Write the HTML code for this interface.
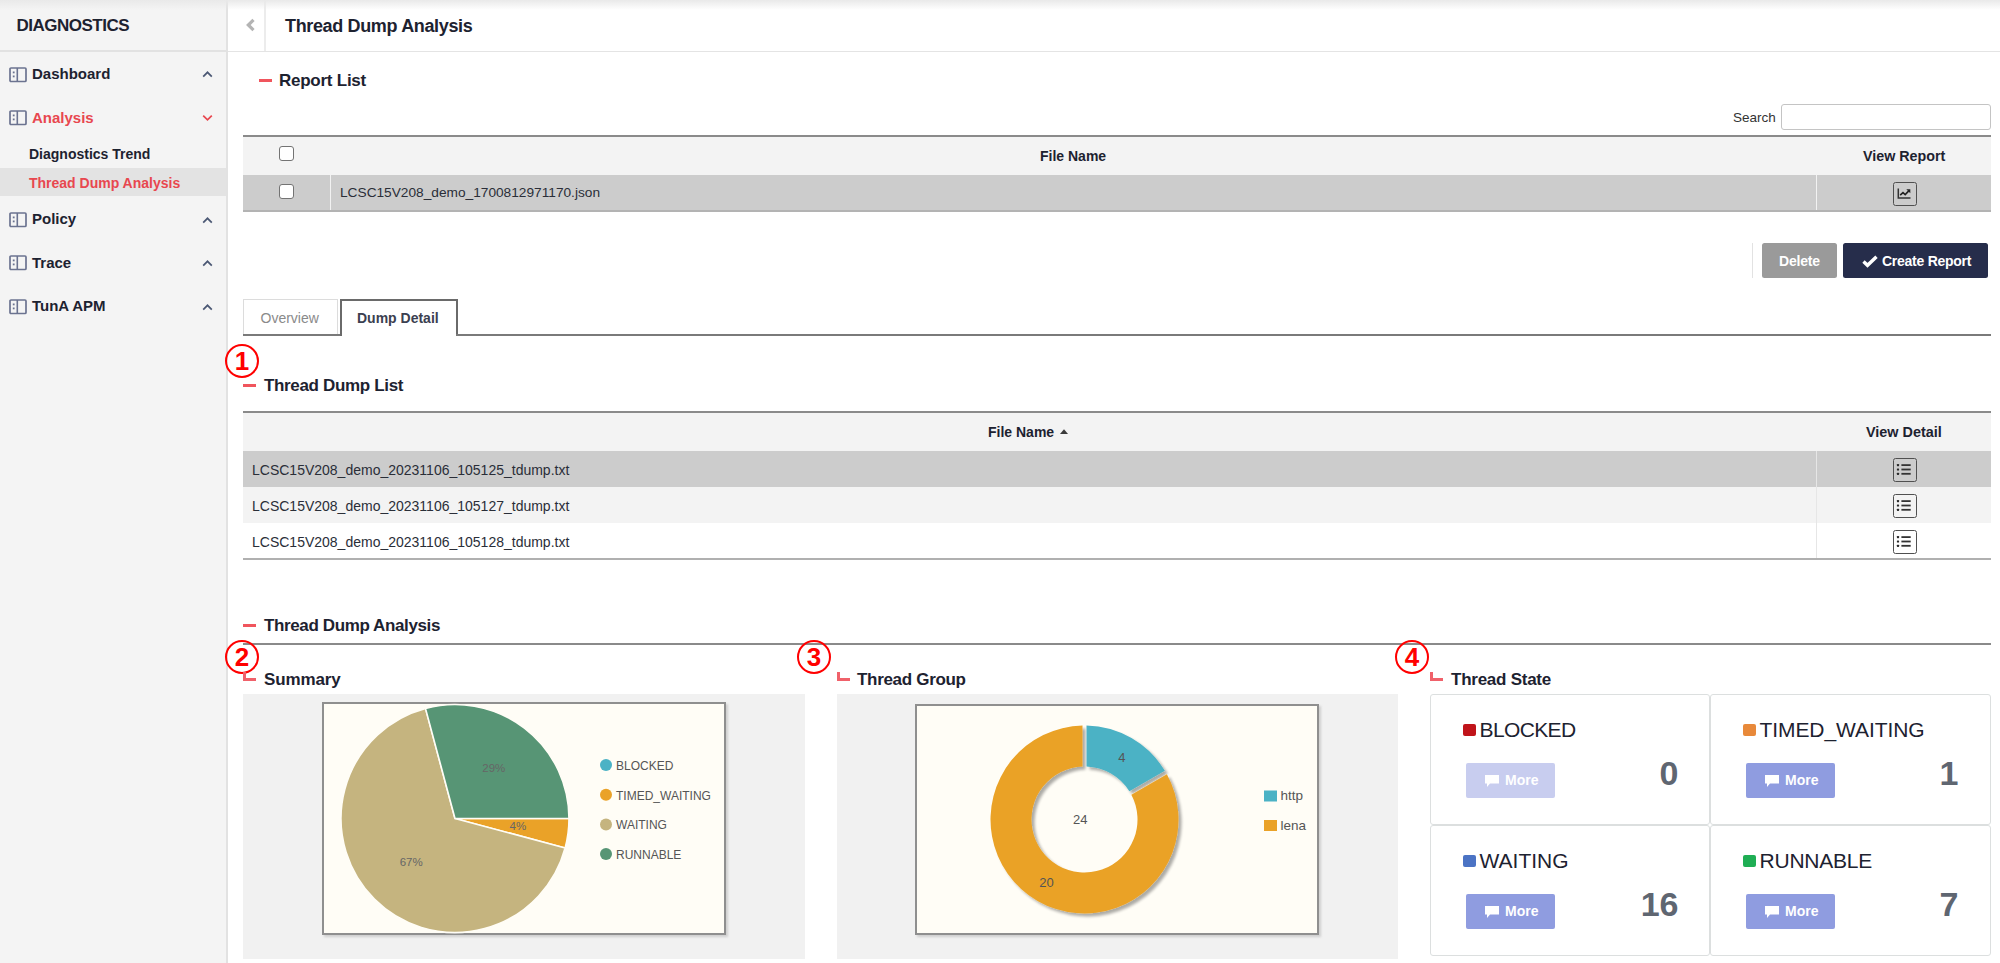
<!DOCTYPE html>
<html><head><meta charset="utf-8">
<style>
*{box-sizing:border-box;margin:0;padding:0}
html,body{width:2000px;height:963px;overflow:hidden;background:#fff;font-family:"Liberation Sans",sans-serif;color:#1d2230}
.a{position:absolute;white-space:nowrap}
.t{position:absolute;white-space:nowrap;line-height:20px;height:20px}
.b{font-weight:bold}
#side{position:absolute;left:0;top:0;width:226px;height:963px;background:#f4f4f4}
#sideb{position:absolute;left:226px;top:0;width:2px;height:963px;background:#e2e2e2}
#topshade{position:absolute;left:0;top:0;width:2000px;height:10px;background:linear-gradient(#e9e9e9,rgba(255,255,255,0))}
.ico{position:absolute;width:18px;height:16px}
.chev{position:absolute;width:7px;height:7px;border-left:2px solid #4d5a78;border-top:2px solid #4d5a78;transform:rotate(45deg)}
.chev.dn{border-color:#e8474f;transform:rotate(225deg)}
.red{color:#e8474f}
.dash{position:absolute;height:3px;background:#f0555d}
.lic{position:absolute;width:13px;height:9px;border-left:3px solid #f0616a;border-bottom:3px solid #f0616a}
.circ{position:absolute;width:34px;height:34px;border:2.3px solid #ff0000;border-radius:50%;color:#ff0000;font-weight:bold;font-size:26px;line-height:30px;text-align:center}
.cb{position:absolute;width:15px;height:15px;border:1px solid #737373;border-radius:3px;background:#fff}
.hline{position:absolute;height:2px;background:#8a8a8a}
.rowicon{position:absolute;width:24px;height:24px;border:1.6px solid #505050;border-radius:2.5px}
.card{position:absolute;border:1px solid #dcdfdf;border-radius:3px;background:#fff}
.sq{position:absolute;width:13px;height:12px;border-radius:2px}
.more{position:absolute;width:89px;height:35px;background:#8f9ce0;border-radius:2px;color:#fff;font-weight:bold;font-size:14px;line-height:35px}
.num{position:absolute;font-weight:bold;font-size:34px;color:#5f6671;line-height:36px;text-align:right}
</style></head><body>
<div id="side"></div>
<div id="sideb"></div>
<!-- header -->
<div class="a" style="left:0;top:50px;width:226px;height:2px;background:#e2e2e2"></div>
<div class="a" style="left:228px;top:50.5px;width:1772px;height:1.5px;background:#e4e4e4"></div>
<div class="a" style="left:264px;top:0;width:1.5px;height:51px;background:#ececec"></div>
<div id="topshade"></div>
<div class="t b" style="left:16.5px;top:15.5px;font-size:17px;letter-spacing:-0.5px">DIAGNOSTICS</div>
<div class="t b" style="left:285px;top:16px;font-size:18px;letter-spacing:-0.35px">Thread Dump Analysis</div>
<svg class="a" style="left:244px;top:17px" width="14" height="16" viewBox="0 0 14 16"><path d="M9.5 2.8 L4.3 8 L9.5 13.2" fill="none" stroke="#b4b4b4" stroke-width="3.2"/></svg>

<!-- sidebar menu -->
<div class="ico" style="left:8.5px;top:66.5px"><svg width="18" height="16" viewBox="0 0 18 16"><rect x="1" y="1" width="16" height="13.5" rx="1" fill="none" stroke="#6b7390" stroke-width="1.7"/><rect x="7.5" y="1" width="1.6" height="13.5" fill="#6b7390"/><rect x="3.8" y="4.5" width="1.8" height="1.8" fill="#6b7390"/><rect x="3.8" y="8.5" width="1.8" height="1.8" fill="#6b7390"/></svg></div>
<div class="t b" style="left:32px;top:64px;font-size:15px">Dashboard</div>
<svg class="a" style="left:201.5px;top:69.3px" width="11" height="10" viewBox="0 0 11 10"><path d="M1.2 7.6 L5.5 3.3 L9.8 7.6" fill="none" stroke="#4b5874" stroke-width="1.7"/></svg>
<div class="ico" style="left:8.5px;top:110px"><svg width="18" height="16" viewBox="0 0 18 16"><rect x="1" y="1" width="16" height="13.5" rx="1" fill="none" stroke="#6b7390" stroke-width="1.7"/><rect x="7.5" y="1" width="1.6" height="13.5" fill="#6b7390"/><rect x="3.8" y="4.5" width="1.8" height="1.8" fill="#6b7390"/><rect x="3.8" y="8.5" width="1.8" height="1.8" fill="#6b7390"/></svg></div>
<div class="t b red" style="left:32px;top:107.5px;font-size:15px">Analysis</div>
<svg class="a" style="left:201.5px;top:113px" width="11" height="10" viewBox="0 0 11 10"><path d="M1.2 2.6 L5.5 6.9 L9.8 2.6" fill="none" stroke="#e8474f" stroke-width="1.7"/></svg>
<div class="t b" style="left:29px;top:143.5px;font-size:14px">Diagnostics Trend</div>
<div class="a" style="left:0;top:168px;width:226px;height:28px;background:#e3e3e3"></div>
<div class="t b red" style="left:29px;top:173px;font-size:14px">Thread Dump Analysis</div>
<div class="ico" style="left:8.5px;top:211.5px"><svg width="18" height="16" viewBox="0 0 18 16"><rect x="1" y="1" width="16" height="13.5" rx="1" fill="none" stroke="#6b7390" stroke-width="1.7"/><rect x="7.5" y="1" width="1.6" height="13.5" fill="#6b7390"/><rect x="3.8" y="4.5" width="1.8" height="1.8" fill="#6b7390"/><rect x="3.8" y="8.5" width="1.8" height="1.8" fill="#6b7390"/></svg></div>
<div class="t b" style="left:32px;top:208.7px;font-size:15px">Policy</div>
<svg class="a" style="left:201.5px;top:214.7px" width="11" height="10" viewBox="0 0 11 10"><path d="M1.2 7.6 L5.5 3.3 L9.8 7.6" fill="none" stroke="#4b5874" stroke-width="1.7"/></svg>
<div class="ico" style="left:8.5px;top:255px"><svg width="18" height="16" viewBox="0 0 18 16"><rect x="1" y="1" width="16" height="13.5" rx="1" fill="none" stroke="#6b7390" stroke-width="1.7"/><rect x="7.5" y="1" width="1.6" height="13.5" fill="#6b7390"/><rect x="3.8" y="4.5" width="1.8" height="1.8" fill="#6b7390"/><rect x="3.8" y="8.5" width="1.8" height="1.8" fill="#6b7390"/></svg></div>
<div class="t b" style="left:32px;top:252.5px;font-size:15px">Trace</div>
<svg class="a" style="left:201.5px;top:257.9px" width="11" height="10" viewBox="0 0 11 10"><path d="M1.2 7.6 L5.5 3.3 L9.8 7.6" fill="none" stroke="#4b5874" stroke-width="1.7"/></svg>
<div class="ico" style="left:8.5px;top:298.5px"><svg width="18" height="16" viewBox="0 0 18 16"><rect x="1" y="1" width="16" height="13.5" rx="1" fill="none" stroke="#6b7390" stroke-width="1.7"/><rect x="7.5" y="1" width="1.6" height="13.5" fill="#6b7390"/><rect x="3.8" y="4.5" width="1.8" height="1.8" fill="#6b7390"/><rect x="3.8" y="8.5" width="1.8" height="1.8" fill="#6b7390"/></svg></div>
<div class="t b" style="left:32px;top:295.5px;font-size:15px">TunA APM</div>
<svg class="a" style="left:201.5px;top:301.5px" width="11" height="10" viewBox="0 0 11 10"><path d="M1.2 7.6 L5.5 3.3 L9.8 7.6" fill="none" stroke="#4b5874" stroke-width="1.7"/></svg>


<!-- Report List -->
<div class="dash" style="left:259px;top:79px;width:13px"></div>
<div class="t b" style="left:279px;top:71px;font-size:17px;letter-spacing:-0.25px">Report List</div>
<div class="t" style="left:1733px;top:108px;font-size:13.5px;color:#333">Search</div>
<div class="a" style="left:1781px;top:104px;width:210px;height:26px;border:1px solid #c4c4c4;border-radius:3px;background:#fff"></div>
<div class="hline" style="left:243px;top:135px;width:1748px"></div>
<div class="a" style="left:243px;top:137px;width:1748px;height:38px;background:#f3f3f3"></div>
<div class="cb" style="left:279px;top:146px"></div>
<div class="t b" style="left:1040px;top:145.8px;font-size:14px">File Name</div>
<div class="t b" style="left:1863px;top:146px;font-size:14.3px">View Report</div>
<div class="a" style="left:243px;top:175px;width:1748px;height:36px;background:#cccccc"></div>
<div class="a" style="left:330px;top:175px;width:1px;height:36px;background:#f2f2f2"></div>
<div class="a" style="left:1816px;top:175px;width:1px;height:36px;background:#f2f2f2"></div>
<div class="cb" style="left:279px;top:184px"></div>
<div class="t" style="left:340px;top:183px;font-size:13.7px;color:#2a2e38">LCSC15V208_demo_1700812971170.json</div>
<div class="a" style="left:243px;top:210px;width:1748px;height:2px;background:#b3b3b3"></div>
<div class="rowicon" style="left:1893px;top:182px"><svg width="21" height="20" viewBox="0 0 21 20" style="position:absolute;left:0;top:0"><path d="M4.3 5.5 V15 H16.5" fill="none" stroke="#333" stroke-width="1.5"/><path d="M6.2 12.2 L9 9.6 L11.2 11.6 L15 7.6" fill="none" stroke="#222" stroke-width="1.6"/><path d="M12.3 6.3 L16.3 6.3 L16.3 10.2 Z" fill="#222"/></svg></div>

<!-- buttons -->
<div class="a" style="left:1752px;top:243px;width:1px;height:35px;background:#e2e2e2"></div>
<div class="a" style="left:1762px;top:243px;width:75px;height:35px;background:#9a9a9a;border-radius:2.5px;color:#fff;font-weight:bold;font-size:14px;letter-spacing:-0.2px;line-height:37.5px;text-align:center">Delete</div>
<div class="a" style="left:1843px;top:243px;width:145px;height:35px;background:#262d4b;border-radius:2.5px;color:#fff;font-weight:bold;font-size:14px;letter-spacing:-0.26px;line-height:37.5px"><svg width="16" height="13" viewBox="0 0 16 13" style="position:absolute;left:19px;top:12px"><path d="M1.5 6.5 L5.5 10.3 L14.5 1.8" fill="none" stroke="#fff" stroke-width="3.4"/></svg><span style="position:absolute;left:39px;top:0">Create Report</span></div>

<!-- tabs -->
<div class="a" style="left:243px;top:299px;width:95px;height:37px;border:1px solid #dcdcdc;border-bottom:none;background:#fff"></div>
<div class="t" style="left:260.5px;top:307.5px;font-size:14px;color:#8a8a8a">Overview</div>
<div class="a" style="left:243px;top:334px;width:97px;height:2px;background:#7a7a7a"></div>
<div class="a" style="left:340px;top:299px;width:118px;height:37px;border:2px solid #6a6a6a;border-bottom:none;background:#fff"></div>
<div class="t b" style="left:357px;top:307.5px;font-size:14px;color:#3b4050">Dump Detail</div>
<div class="a" style="left:456px;top:334px;width:1535px;height:2px;background:#7a7a7a"></div>

<!-- Thread Dump List -->
<div class="circ" style="left:225px;top:344px">1</div>
<div class="dash" style="left:243px;top:384px;width:13px"></div>
<div class="t b" style="left:264px;top:376px;font-size:17px;letter-spacing:-0.34px">Thread Dump List</div>
<div class="hline" style="left:243px;top:411px;width:1748px"></div>
<div class="a" style="left:243px;top:413px;width:1748px;height:38px;background:#f3f3f3"></div>
<div class="t b" style="left:988px;top:421.5px;font-size:14px">File Name</div>
<svg class="a" style="left:1059.5px;top:429px" width="8" height="5.5" viewBox="0 0 8 5.5"><path d="M0 5 L4 0.3 L8 5 Z" fill="#3a3a3a"/></svg>
<div class="t b" style="left:1866px;top:421.5px;font-size:14.4px">View Detail</div>
<div class="a" style="left:243px;top:451px;width:1748px;height:36px;background:#cccccc"></div>
<div class="a" style="left:243px;top:487px;width:1748px;height:36px;background:#f3f3f3"></div>
<div class="a" style="left:243px;top:523px;width:1748px;height:36px;background:#ffffff"></div>
<div class="a" style="left:1816px;top:451px;width:1px;height:108px;background:#e6e6e6"></div>
<div class="a" style="left:243px;top:558px;width:1748px;height:2px;background:#b0b0b0"></div>
<div class="t" style="left:252px;top:459.5px;font-size:14px;color:#2a2e38">LCSC15V208_demo_20231106_105125_tdump.txt</div>
<div class="t" style="left:252px;top:495.5px;font-size:14px;color:#2a2e38">LCSC15V208_demo_20231106_105127_tdump.txt</div>
<div class="t" style="left:252px;top:531.5px;font-size:14px;color:#2a2e38">LCSC15V208_demo_20231106_105128_tdump.txt</div>
<div class="rowicon" style="left:1893px;top:458px"><svg width="21" height="20" viewBox="0 0 21 20" style="position:absolute;left:0;top:0"><rect x="2.9" y="5" width="2.2" height="2.2" rx="0.6" fill="#2a2a2a"/><rect x="2.9" y="9.4" width="2.2" height="2.2" rx="0.6" fill="#2a2a2a"/><rect x="2.9" y="13.7" width="2.2" height="2.2" rx="0.6" fill="#2a2a2a"/><rect x="7.4" y="5.2" width="9.3" height="1.8" fill="#333"/><rect x="7.4" y="9.6" width="9.3" height="1.8" fill="#333"/><rect x="7.4" y="13.9" width="9.3" height="1.8" fill="#333"/></svg></div>
<div class="rowicon" style="left:1893px;top:494px"><svg width="21" height="20" viewBox="0 0 21 20" style="position:absolute;left:0;top:0"><rect x="2.9" y="5" width="2.2" height="2.2" rx="0.6" fill="#2a2a2a"/><rect x="2.9" y="9.4" width="2.2" height="2.2" rx="0.6" fill="#2a2a2a"/><rect x="2.9" y="13.7" width="2.2" height="2.2" rx="0.6" fill="#2a2a2a"/><rect x="7.4" y="5.2" width="9.3" height="1.8" fill="#333"/><rect x="7.4" y="9.6" width="9.3" height="1.8" fill="#333"/><rect x="7.4" y="13.9" width="9.3" height="1.8" fill="#333"/></svg></div>
<div class="rowicon" style="left:1893px;top:530px"><svg width="21" height="20" viewBox="0 0 21 20" style="position:absolute;left:0;top:0"><rect x="2.9" y="5" width="2.2" height="2.2" rx="0.6" fill="#2a2a2a"/><rect x="2.9" y="9.4" width="2.2" height="2.2" rx="0.6" fill="#2a2a2a"/><rect x="2.9" y="13.7" width="2.2" height="2.2" rx="0.6" fill="#2a2a2a"/><rect x="7.4" y="5.2" width="9.3" height="1.8" fill="#333"/><rect x="7.4" y="9.6" width="9.3" height="1.8" fill="#333"/><rect x="7.4" y="13.9" width="9.3" height="1.8" fill="#333"/></svg></div>

<!-- Thread Dump Analysis -->
<div class="dash" style="left:243px;top:624px;width:13px"></div>
<div class="t b" style="left:264px;top:616px;font-size:17px;letter-spacing:-0.38px">Thread Dump Analysis</div>
<div class="hline" style="left:243px;top:643px;width:1748px"></div>
<div class="circ" style="left:225px;top:640px">2</div>
<div class="circ" style="left:797px;top:640px">3</div>
<div class="circ" style="left:1395px;top:640px">4</div>
<div class="lic" style="left:243px;top:672px"></div>
<div class="t b" style="left:264px;top:670px;font-size:17px;letter-spacing:-0.14px">Summary</div>
<div class="lic" style="left:837px;top:672px"></div>
<div class="t b" style="left:857px;top:669.5px;font-size:17px;letter-spacing:-0.31px">Thread Group</div>
<div class="lic" style="left:1430px;top:672px"></div>
<div class="t b" style="left:1451px;top:669.5px;font-size:17px;letter-spacing:-0.25px">Thread State</div>

<div class="a" style="left:243px;top:694px;width:562px;height:265px;background:#f1f1f1"></div>
<div class="a" style="left:837px;top:694px;width:561px;height:265px;background:#f1f1f1"></div>

<!-- CARDS --><div class="card" style="left:1430px;top:694px;width:280px;height:131px"></div><div class="sq" style="left:1463px;top:724px;background:#c0141a"></div><div class="t" style="left:1479.5px;top:720px;font-size:21px;letter-spacing:-0.63px;color:#1d2230">BLOCKED</div><div class="more" style="left:1466px;top:763px;background:#c8cdef"><svg width="16" height="14" viewBox="0 0 16 14" style="position:absolute;left:18px;top:11px"><path d="M1 1 H15 V9.5 H6 L3 13 V9.5 H1 Z" fill="#fff"/></svg><span style="position:absolute;left:39px;top:0">More</span></div><div class="num" style="left:1570px;top:755px;width:108.5px">0</div><div class="card" style="left:1710px;top:694px;width:281px;height:131px"></div><div class="sq" style="left:1743px;top:724px;background:#e8893a"></div><div class="t" style="left:1759.5px;top:720px;font-size:21px;letter-spacing:-0.08px;color:#1d2230">TIMED_WAITING</div><div class="more" style="left:1746px;top:763px;background:#8f9ce0"><svg width="16" height="14" viewBox="0 0 16 14" style="position:absolute;left:18px;top:11px"><path d="M1 1 H15 V9.5 H6 L3 13 V9.5 H1 Z" fill="#fff"/></svg><span style="position:absolute;left:39px;top:0">More</span></div><div class="num" style="left:1850px;top:755px;width:108.5px">1</div><div class="card" style="left:1430px;top:825px;width:280px;height:131px"></div><div class="sq" style="left:1463px;top:855px;background:#4b73c4"></div><div class="t" style="left:1479.5px;top:851px;font-size:21px;letter-spacing:0px;color:#1d2230">WAITING</div><div class="more" style="left:1466px;top:894px;background:#8f9ce0"><svg width="16" height="14" viewBox="0 0 16 14" style="position:absolute;left:18px;top:11px"><path d="M1 1 H15 V9.5 H6 L3 13 V9.5 H1 Z" fill="#fff"/></svg><span style="position:absolute;left:39px;top:0">More</span></div><div class="num" style="left:1570px;top:886px;width:108.5px">16</div><div class="card" style="left:1710px;top:825px;width:281px;height:131px"></div><div class="sq" style="left:1743px;top:855px;background:#1fae54"></div><div class="t" style="left:1759.5px;top:851px;font-size:21px;letter-spacing:-0.22px;color:#1d2230">RUNNABLE</div><div class="more" style="left:1746px;top:894px;background:#8f9ce0"><svg width="16" height="14" viewBox="0 0 16 14" style="position:absolute;left:18px;top:11px"><path d="M1 1 H15 V9.5 H6 L3 13 V9.5 H1 Z" fill="#fff"/></svg><span style="position:absolute;left:39px;top:0">More</span></div><div class="num" style="left:1850px;top:886px;width:108.5px">7</div><!-- /CARDS -->
<!-- CHARTS --><div class="a" style="left:324px;top:704px;width:404px;height:233px;background:#cfcfcf;filter:blur(0.8px)"></div><svg class="a" style="left:322px;top:702px" width="404" height="233" viewBox="0 0 404 233"><rect x="1" y="1" width="402" height="231" fill="#fffdf6" stroke="#8f8f8f" stroke-width="2"/><path d="M133.00 116.50 L247.00 116.50 A114 114 0 0 1 243.12 146.01 Z" fill="#eaa228" stroke="#fffdf6" stroke-width="1.6" stroke-linejoin="round"/><path d="M133.00 116.50 L243.12 146.01 A114 114 0 1 1 103.49 6.38 Z" fill="#c5b47f" stroke="#fffdf6" stroke-width="1.6" stroke-linejoin="round"/><path d="M133.00 116.50 L103.49 6.38 A114 114 0 0 1 247.00 116.50 Z" fill="#579575" stroke="#fffdf6" stroke-width="1.6" stroke-linejoin="round"/><text x="171.8" y="66.3" font-family="Liberation Sans" font-size="11.5" fill="#666" text-anchor="middle" dominant-baseline="central">29%</text><text x="195.8" y="124.3" font-family="Liberation Sans" font-size="11.5" fill="#666" text-anchor="middle" dominant-baseline="central">4%</text><text x="89.2" y="160.0" font-family="Liberation Sans" font-size="11.5" fill="#666" text-anchor="middle" dominant-baseline="central">67%</text><circle cx="284" cy="63.0" r="6" fill="#4bb2c5"/><text x="294" y="63.8" font-family="Liberation Sans" font-size="12" fill="#555" dominant-baseline="central">BLOCKED</text><circle cx="284" cy="92.7" r="6" fill="#eaa228"/><text x="294" y="93.5" font-family="Liberation Sans" font-size="12" fill="#555" dominant-baseline="central">TIMED_WAITING</text><circle cx="284" cy="122.4" r="6" fill="#c5b47f"/><text x="294" y="123.2" font-family="Liberation Sans" font-size="12" fill="#555" dominant-baseline="central">WAITING</text><circle cx="284" cy="152.1" r="6" fill="#579575"/><text x="294" y="152.9" font-family="Liberation Sans" font-size="12" fill="#555" dominant-baseline="central">RUNNABLE</text></svg><div class="a" style="left:917px;top:706px;width:404px;height:231px;background:#cfcfcf;filter:blur(0.8px)"></div><svg class="a" style="left:915px;top:704px;overflow:visible" width="404" height="231" viewBox="0 0 404 231"><defs><filter id="sh" x="-20%" y="-20%" width="150%" height="150%"><feGaussianBlur in="SourceAlpha" stdDeviation="1.6"/><feOffset dx="2.5" dy="2.5" result="o"/><feComponentTransfer><feFuncA type="linear" slope="0.33"/></feComponentTransfer><feMerge><feMergeNode/><feMergeNode in="SourceGraphic"/></feMerge></filter></defs><rect x="1" y="1" width="402" height="229" fill="#fffdf6" stroke="#8f8f8f" stroke-width="2"/><g filter="url(#sh)"><path d="M171.50 21.52 A94 94 0 0 1 249.89 66.78 L214.37 87.29 A53 53 0 0 0 171.50 62.54 Z" fill="#4bb2c5"/><path d="M251.89 70.24 A94 94 0 1 1 167.50 21.52 L167.50 62.54 A53 53 0 1 0 216.37 90.75 Z" fill="#eaa228"/></g><text x="206.9" y="53.5" font-family="Liberation Sans" font-size="13" fill="#555" text-anchor="middle" dominant-baseline="central">4</text><text x="165.3" y="115.0" font-family="Liberation Sans" font-size="13" fill="#555" text-anchor="middle" dominant-baseline="central">24</text><text x="131.6" y="178.2" font-family="Liberation Sans" font-size="13" fill="#555" text-anchor="middle" dominant-baseline="central">20</text><rect x="349" y="86.5" width="13" height="11" fill="#4bb2c5"/><rect x="349" y="116" width="13" height="11" fill="#eaa228"/><text x="365.5" y="91.79999999999995" font-family="Liberation Sans" font-size="13.5" fill="#555" dominant-baseline="central">http</text><text x="365.5" y="121.5" font-family="Liberation Sans" font-size="13.5" fill="#555" dominant-baseline="central">lena</text></svg><!-- /CHARTS -->
</body></html>
